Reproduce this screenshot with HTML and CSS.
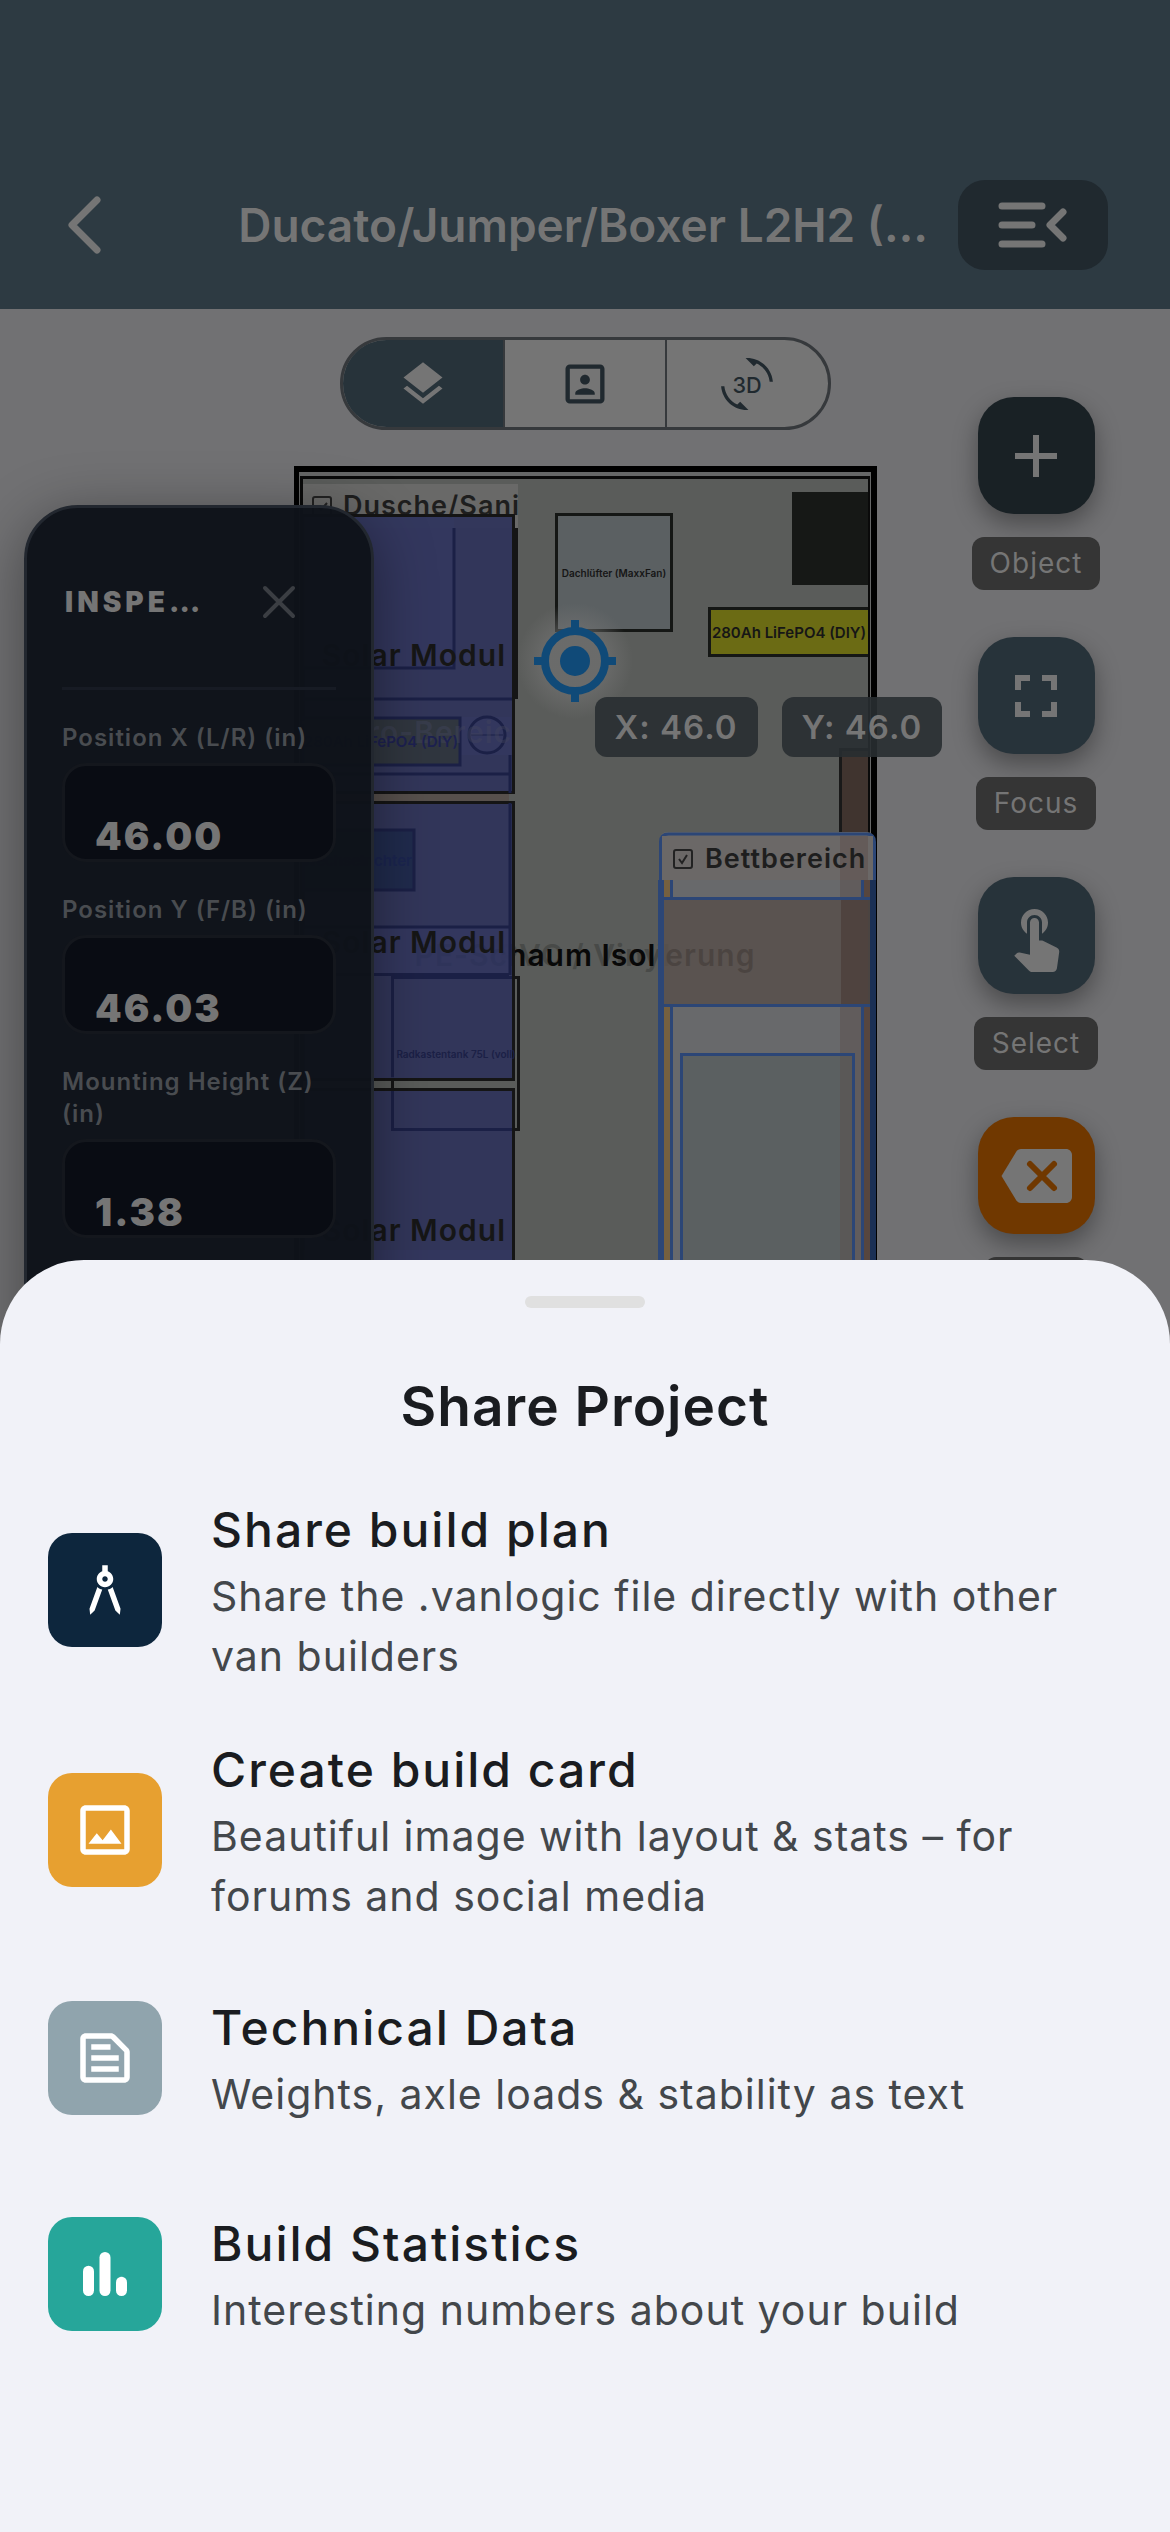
FILE: index.html
```
<!DOCTYPE html>
<html lang="en">
<head>
  <meta charset="UTF-8" />
  <meta name="viewport" content="width=device-width, initial-scale=1.0"/>
  <title>Share Project</title>
  <link rel="stylesheet" href="styles.css">
</head>
<body>

  <header class="topbar">
    <button class="back" aria-label="Back">
      <svg width="36" height="60" viewBox="0 0 36 60"><path d="M31 5L6 30l25 25" fill="none" stroke="currentColor" stroke-width="7" stroke-linecap="round" stroke-linejoin="round"/></svg>
    </button>
    <h1>Ducato/Jumper/Boxer L2H2 (…</h1>
    <button class="menu" aria-label="Open menu">
      <svg width="74" height="48" viewBox="0 0 74 48"><path d="M6 5h40M6 24h30M6 43h40M67 11L54 24l13 13" fill="none" stroke="currentColor" stroke-width="7" stroke-linecap="round" stroke-linejoin="round"/></svg>
    </button>
  </header>

  <main class="workspace">
    <div class="views">
      <button class="active" aria-label="Layers">
        <svg class="icon-m" viewBox="0 0 24 24"><path d="M11.99 18.54l-7.37-5.73L3 14.07l9 7 9-7-1.63-1.27-7.38 5.74zM12 16l7.36-5.73L21 9l-9-7-9 7 1.63 1.27L12 16z"/></svg>
      </button>
      <button aria-label="Front view">
        <svg class="icon-m" viewBox="0 0 24 24"><path d="M12 12.25c1.24 0 2.25-1.01 2.25-2.25S13.24 7.75 12 7.75 9.75 8.76 9.75 10s1.01 2.25 2.25 2.25zm4.5 4c0-1.5-3-2.25-4.5-2.25s-4.5.75-4.5 2.25V17h9v-.75zM19 3H5c-1.1 0-2 .9-2 2v14c0 1.1.9 2 2 2h14c1.1 0 2-.9 2-2V5c0-1.1-.9-2-2-2zm0 16H5V5h14v14z"/></svg>
      </button>
      <button aria-label="3D view">
        <svg class="icon-m" viewBox="0 0 24 24"><path d="M7.52 21.48C4.25 19.94 1.91 16.76 1.55 13H.05C.56 19.16 5.71 24 12 24l.66-.03-3.81-3.81-1.33 1.32zM16.48 2.52c3.27 1.55 5.61 4.72 5.97 8.48h1.5C23.44 4.84 18.29 0 12 0l-.66.03 3.81 3.81 1.33-1.32z"/><text class="three-d" x="12" y="16" text-anchor="middle">3D</text></svg>
      </button>
    </div>

    <div class="plan">
      <svg width="583" height="834" viewBox="294 466 583 834">
        <defs>
          <radialGradient id="glow">
            <stop offset="0.5" stop-color="#757575" stop-opacity="0.6"/>
            <stop offset="1" stop-color="#757575" stop-opacity="0"/>
          </radialGradient>
        </defs>

        <!-- van body -->
        <path d="M294 466h583v840H294z" fill="#000"/>
        <path d="M299 472h572v840H299z" fill="#666767"/>
        <path d="M300 476h570v840H300z" fill="#0a0a0a"/>
        <path d="M303 479h565v840H303z" fill="#5a5c5a"/>
        <path d="M303 484h215v44H303z" fill="#696968"/>
        <rect x="313" y="497" width="18" height="18" rx="2" fill="none" stroke="#222" stroke-width="2"/>
        <path d="M318 507l3 3 6-7" fill="none" stroke="#222" stroke-width="2"/>
        <text class="zone" x="343" y="515">Dusche/Sani</text>

        <text class="label" x="585" y="966" text-anchor="middle" fill="#484a48">PVC / Vinyl</text>
        <text class="label" x="585" y="966" text-anchor="middle" fill="#080808">PE-Schaum Isolierung</text>
        <path d="M392.500 977.500h126v152h-126z" fill="none" stroke="#151515" stroke-width="3"/>
        <path d="M516.500 528v171" stroke="#151515" stroke-width="3"/>

        <!-- beige wall between the modules -->
        <path d="M303 794h206v7H303z" fill="#57504c"/>

        <!-- solar modules -->
        <g fill="#2e325a" fill-opacity="0.9" stroke="#151515" stroke-width="3">
          <path d="M303 515.500h210.500v277H303z"/>
          <path d="M303 802.500h210.500v277H303z"/>
          <path d="M303 1089.500h210.500v277H303z"/>
        </g>
        <path d="M303 517h151v150H303zM303 717h208v38H303zM303 928h206v45H303zM303 1250h209v60H303z" fill="#343960" fill-opacity="0.6"/>
        <g fill="none" stroke="#1b2046" stroke-width="3">
          <path d="M303 668h151V528M303 699h209M303 774h206M303 927h206M303 974.500h206M510 755v38M510 803v172"/>
          <path d="M303 718h157v47H303z" fill="#30363f"/>
          <circle cx="487" cy="735" r="18"/>
          <path d="M471 735h32" stroke-width="1"/>
          <path d="M303 830h111v60H303z" fill="#202b4d"/>
          <path d="M392.500 1077v-99.500H512M392.500 1091v38.500H512"/>
        </g>
        <text class="label" x="512" y="743" text-anchor="end" fill="#41445c" fill-opacity="0.45">Elektro-Bereic</text>
        <text class="part" x="458" y="747" text-anchor="end" fill="#1d2150">280Ah LiFePO4 (DIY)</text>
        <text class="part" x="412" y="866" text-anchor="end" fill="#1b2550">Wechselrichter</text>
        <text class="tiny" x="456" y="1058" text-anchor="middle" fill="#1b2046">Radkastentank 75L (voll)</text>
        <g class="label" text-anchor="end" fill="#161616">
          <text x="506" y="666">Solar Modul</text>
          <text x="506" y="953">Solar Modul</text>
          <text x="506" y="1241">Solar Modul</text>
        </g>

        <!-- roof parts -->
        <path d="M556.500 514.500h115v116h-115z" fill="#5b6062" stroke="#151715" stroke-width="3"/>
        <text class="tiny" x="614" y="577" text-anchor="middle" fill="#161616">Dachlüfter (MaxxFan)</text>
        <path d="M792 492h76v93h-76z" fill="#161816"/>
        <path d="M868 608.500H709.500v47H868" fill="#6b6b14" stroke="#151715" stroke-width="3"/>
        <text class="part" x="789" y="638" text-anchor="middle" fill="#161616">280Ah LiFePO4 (DIY)</text>
        <path d="M868 749.500h-27.500V840" fill="none" stroke="#191919" stroke-width="3"/>
        <path d="M842 751h26v89h-26z" fill="#40342f"/>

        <!-- bed -->
        <path d="M660 840q0-8 8-8h198q8 0 8 8v59H660z" fill="#68696b"/>
        <path d="M664 880h6v18h-6zM664 1006h6v300h-6z" fill="#75603f"/>
        <path d="M664 899h206v106H664z" fill="#5a524e" fill-opacity="0.82"/>
        <path d="M841 899h27v106h-27z" fill="#4f433f"/>
        <path d="M670 1006h194v300H670z" fill="#68696b"/>
        <path d="M864 880h6v18h-6zM864 1006h6v300h-6z" fill="#57463f"/>
        <path d="M681.500 1054.500h172v250h-172z" fill="#5b6061"/>
        <path d="M840 880h21v18h-21zM840 1006h21v300h-21z" fill="#59504e" fill-opacity="0.5"/>
        <path d="M870 880h6v420h-6z" fill="#1b3055"/>
        <g fill="none" stroke="#2c4676" stroke-width="3">
          <path d="M671.500 880v18M671.500 1006v300M862.500 880v18M862.500 1006v300M664 898.500h206M664 1005.500h206"/>
          <path d="M681.500 1054.500h172v250h-172z"/>
          <path d="M660.500 1300V842q0-8 8-8h198q8 0 8 8v38"/>
          <path d="M661 880v420" stroke-width="6"/>
        </g>
        <path d="M662 836h211v44H662z" fill="#6b6867"/>
        <path d="M840 836h28v44h-28z" fill="#645b59"/>
        <rect x="674" y="850" width="18" height="18" rx="2" fill="none" stroke="#222" stroke-width="2"/>
        <path d="M679 859l3 4 5-8" fill="none" stroke="#222" stroke-width="2"/>
        <text class="zone" x="705" y="868">Bettbereich</text>

        <!-- position marker -->
        <circle cx="575" cy="661" r="58" fill="url(#glow)"/>
        <g stroke="#104a78" stroke-width="8" fill="none">
          <circle cx="575" cy="661" r="30"/>
          <path d="M575 620v12M575 690v12M534 661h12M604 661h12"/>
        </g>
        <circle cx="575" cy="661" r="15" fill="#104a78"/>
      </svg>
      <div class="coords"><span>X: 46.0</span><span>Y: 46.0</span></div>
    </div>

    <aside class="inspector">
      <div class="inspector-head">
        <h2>INSPE…</h2>
        <button aria-label="Close inspector">
          <svg width="36" height="36" viewBox="0 0 36 36"><path d="M4 4l28 28M32 4L4 32" stroke="currentColor" stroke-width="4" stroke-linecap="round"/></svg>
        </button>
      </div>
      <div class="field">
        <label for="posX">Position X (L/R) (in)</label>
        <input type="text" id="posX" value="46.00" />
      </div>
      <div class="field">
        <label for="posY">Position Y (F/B) (in)</label>
        <input type="text" id="posY" value="46.03" />
      </div>
      <div class="field">
        <label for="posZ">Mounting Height (Z) (in)</label>
        <input type="text" id="posZ" value="1.38" />
      </div>
    </aside>

    <nav class="tools">
      <div class="tool">
        <button class="dark" aria-labelledby="tObject"><svg class="icon-l" viewBox="0 0 24 24"><path d="M19 13h-6v6h-2v-6H5v-2h6V5h2v6h6v2z"/></svg></button>
        <span id="tObject">Object</span>
      </div>
      <div class="tool">
        <button aria-labelledby="tFocus"><svg class="icon-l" viewBox="0 0 24 24"><path d="M7 14H5v5h5v-2H7v-3zm-2-4h2V7h3V5H5v5zm12 7h-3v2h5v-5h-2v3zM14 5v2h3v3h2V5h-5z"/></svg></button>
        <span id="tFocus">Focus</span>
      </div>
      <div class="tool">
        <button aria-labelledby="tSelect"><svg class="icon-l" viewBox="0 0 24 24"><path d="M9 11.240V7.500C9 6.120 10.120 5 11.500 5S14 6.120 14 7.500v3.740c1.210-.81 2-2.180 2-3.740C16 5.010 13.990 3 11.500 3S7 5.010 7 7.500c0 1.560.79 2.930 2 3.740zm9.840 4.630l-4.540-2.260c-.17-.07-.35-.11-.54-.11H13v-6c0-.83-.67-1.500-1.500-1.500S10 6.670 10 7.500v10.740l-3.430-.72c-.08-.01-.15-.03-.24-.03-.31 0-.59.13-.79.33l-.79.8 4.940 4.940c.27.27.65.44 1.060.44h6.790c.75 0 1.330-.55 1.440-1.280l.75-5.270c.01-.07.02-.14.02-.2 0-.62-.38-1.160-.91-1.380z"/></svg></button>
        <span id="tSelect">Select</span>
      </div>
      <div class="tool">
        <button class="orange" aria-label="Delete"><svg class="icon-l" viewBox="0 0 24 24"><path d="M22 3H7c-.69 0-1.230.35-1.590.88L0.500 12l4.910 8.110c.36.53.9.89 1.590.89h15c1.100 0 2-.9 2-2V5c0-1.100-.9-2-2-2z"/><path d="M10 8l8 8M18 8l-8 8" stroke="#703800" stroke-width="2" stroke-linecap="round"/></svg></button>
        <span class="tool-blank"></span>
      </div>
    </nav>
  </main>

  <section class="sheet" role="dialog" aria-labelledby="sheetTitle">
    <div class="handle"></div>
    <h2 id="sheetTitle">Share Project</h2>
    <button class="option tall">
      <span class="badge navy"><svg viewBox="0 0 24 24"><path d="M6.360 18.780L6.610 21l1.620-1.540 2.770-7.600c-.68-.17-1.280-.51-1.770-.98l-2.870 7.900zM14.770 10.880c-.49.47-1.100.81-1.770.98l2.770 7.600L17.390 21l.26-2.220-2.880-7.900zM15 8c0-1.300-.84-2.400-2-2.820V3h-2v2.180C9.840 5.600 9 6.700 9 8c0 1.660 1.340 3 3 3s3-1.340 3-3zm-3 1c-.55 0-1-.45-1-1s.45-1 1-1 1 .45 1 1-.45 1-1 1z"/></svg></span>
      <span class="option-text"><strong>Share build plan</strong><small>Share the .vanlogic file directly with other van builders</small></span>
    </button>
    <button class="option tall">
      <span class="badge amber"><svg viewBox="0 0 24 24"><path d="M19 5v14H5V5h14m0-2H5c-1.100 0-2 .9-2 2v14c0 1.100.9 2 2 2h14c1.100 0 2-.9 2-2V5c0-1.100-.9-2-2-2zm-4.860 8.860l-3 3.870L9 13.140 6 17h12l-3.860-5.140z"/></svg></span>
      <span class="option-text"><strong>Create build card</strong><small>Beautiful image with layout &amp; stats – for forums and social media</small></span>
    </button>
    <button class="option">
      <span class="badge slate"><svg viewBox="0 0 24 24"><path d="M14.170 5L19 9.830V19H5V5h9.170m0-2H5c-1.100 0-2 .9-2 2v14c0 1.100.9 2 2 2h14c1.100 0 2-.9 2-2V9.830c0-.53-.21-1.040-.59-1.410l-4.830-4.830c-.37-.38-.88-.59-1.410-.59zM7 15h10v2H7v-2zm0-4h10v2H7v-2zm0-4h7v2H7V7z"/></svg></span>
      <span class="option-text"><strong>Technical Data</strong><small>Weights, axle loads &amp; stability as text</small></span>
    </button>
    <button class="option">
      <span class="badge teal"><svg viewBox="0 0 24 24"><rect x="4" y="9" width="4" height="11" rx="2"/><rect x="10" y="4" width="4" height="16" rx="2"/><rect x="16" y="13" width="4" height="7" rx="2"/></svg></span>
      <span class="option-text"><strong>Build Statistics</strong><small>Interesting numbers about your build</small></span>
    </button>
  </section>

</body>
</html>
```
FILE: styles.css
```
* {
  box-sizing: border-box;
}

body {
  margin: 0;
  height: 100vh;
  display: flex;
  flex-direction: column;
  overflow: hidden;
  font-family: Inter, "Liberation Sans", sans-serif;
  background: #717173;
  color: #757575;
}

h1, h2 {
  margin: 0;
}

button {
  display: flex;
  align-items: center;
  justify-content: center;
  padding: 0;
  border: none;
  background: none;
  color: inherit;
  font-family: inherit;
  cursor: pointer;
}

svg {
  display: block;
  fill: currentColor;
}

.icon-m {
  width: 52px;
  height: 52px;
}

.icon-l {
  width: 72px;
  height: 72px;
}

/* top bar */
.topbar {
  display: flex;
  align-items: center;
  justify-content: space-between;
  padding: 180px 62px 39px 66px;
  background: #2d3a42;
}

.topbar h1 {
  flex: 1;
  padding-right: 30px;
  text-align: right;
  white-space: nowrap;
  font-size: 46px;
  font-weight: 600;
  line-height: 60px;
}

.menu {
  width: 150px;
  height: 90px;
  border-radius: 27px;
  background: #20292f;
}

/* workspace */
.workspace {
  position: relative;
  flex: 1;
  overflow: hidden;
  padding-top: 28px;
}

.views {
  display: flex;
  width: 491px;
  height: 93px;
  margin: 0 auto 36px;
  border: 3px solid #36393c;
  border-radius: 47px;
  overflow: hidden;
  background: #757575;
  color: #20292f;
}

.views button {
  flex: 1;
}

.views button + button {
  border-left: 2px solid #36393c;
}

.views .active {
  background: #27333a;
  color: #757575;
}

.three-d {
  font-size: 10px;
  font-weight: 500;
}

.plan {
  position: relative;
  width: 583px;
  margin: 0 auto;
}

.label {
  font-size: 30px;
  font-weight: 600;
  letter-spacing: 1px;
}

.zone {
  font-size: 27px;
  font-weight: 600;
  letter-spacing: 1px;
  fill: #1e1e1e;
}

.part {
  font-size: 15px;
  font-weight: 600;
}

.tiny {
  font-size: 10px;
  font-weight: 600;
}

.coords {
  position: absolute;
  top: 231px;
  left: 301px;
  display: flex;
  gap: 24px;
}

.coords span {
  padding: 0 20px;
  border-radius: 12px;
  background: rgba(40, 45, 49, 0.9);
  font-size: 33px;
  font-weight: 600;
  line-height: 60px;
  letter-spacing: 1px;
  white-space: nowrap;
}

/* inspector */
.inspector {
  position: absolute;
  top: 196px;
  left: 24px;
  width: 350px;
  height: 900px;
  padding: 0 35px;
  border: 3px solid #22272f;
  border-radius: 54px;
  background: rgba(14, 18, 26, 0.98);
  box-shadow: 0 12px 60px rgba(0, 0, 0, 0.4);
}

.inspector-head {
  display: flex;
  align-items: center;
  justify-content: space-between;
  height: 182px;
  padding: 8px 39px 0 3px;
  border-bottom: 3px solid #171b24;
}

.inspector h2 {
  font-size: 28px;
  font-weight: 900;
  letter-spacing: 4px;
}

.inspector-head button {
  color: #3b3e43;
}

.field {
  display: flex;
  flex-direction: column;
  gap: 9px;
  margin-top: 32px;
}

.field label {
  font-size: 24px;
  font-weight: 600;
  line-height: 32px;
  letter-spacing: 1px;
  color: #494c50;
}

.field input {
  width: 100%;
  height: 99px;
  padding: 46px 30px 0;
  border: 3px solid #14171d;
  border-radius: 24px;
  background: #090c13;
  color: #757575;
  font-family: inherit;
  font-size: 38px;
  font-weight: 900;
  letter-spacing: 2px;
}

/* tools on the right */
.tools {
  position: absolute;
  top: 88px;
  right: 54px;
  width: 160px;
  display: flex;
  flex-direction: column;
  gap: 47px;
}

.tool {
  display: flex;
  flex-direction: column;
  align-items: center;
  gap: 23px;
}

.tool button {
  width: 117px;
  height: 117px;
  border-radius: 36px;
  background: #27333a;
  box-shadow: 0 10px 24px rgba(0, 0, 0, 0.35);
}

.tool .dark {
  background: #192125;
}

.tool .orange {
  background: #703800;
}

.tool span {
  padding: 0 18px;
  border-radius: 12px;
  background: #353535;
  font-size: 28px;
  line-height: 53px;
  letter-spacing: 1px;
}

.tool .tool-blank {
  width: 104px;
  height: 53px;
}

/* bottom sheet */
.sheet {
  position: fixed;
  left: 0;
  right: 0;
  bottom: 0;
  padding: 36px 48px 150px;
  border-radius: 84px 84px 0 0;
  background: #f1f2f8;
  color: #1a1c20;
}

.handle {
  width: 120px;
  height: 12px;
  margin: 0 auto 62px;
  border-radius: 6px;
  background: #e0e0e0;
}

.sheet h2 {
  margin-bottom: 28px;
  text-align: center;
  font-size: 55px;
  font-weight: 600;
  line-height: 72px;
  letter-spacing: 1px;
}

.option {
  width: 100%;
  height: 216px;
  justify-content: flex-start;
  gap: 49px;
  text-align: left;
}

.option.tall {
  height: 240px;
}

.badge {
  flex: none;
  display: flex;
  align-items: center;
  justify-content: center;
  width: 114px;
  height: 114px;
  border-radius: 24px;
  color: #fff;
}

.badge svg {
  width: 66px;
  height: 66px;
}

.navy { background: #0d263d; }
.amber { background: #e7a030; }
.slate { background: #90a4ad; }
.teal { background: #26a69a; }

.option-text {
  flex: 1;
  display: flex;
  flex-direction: column;
}

.option-text strong {
  font-size: 48px;
  font-weight: 500;
  line-height: 72px;
  letter-spacing: 2px;
}

.option-text small {
  color: #43474b;
  font-size: 41px;
  line-height: 60px;
  letter-spacing: 1px;
}
```
